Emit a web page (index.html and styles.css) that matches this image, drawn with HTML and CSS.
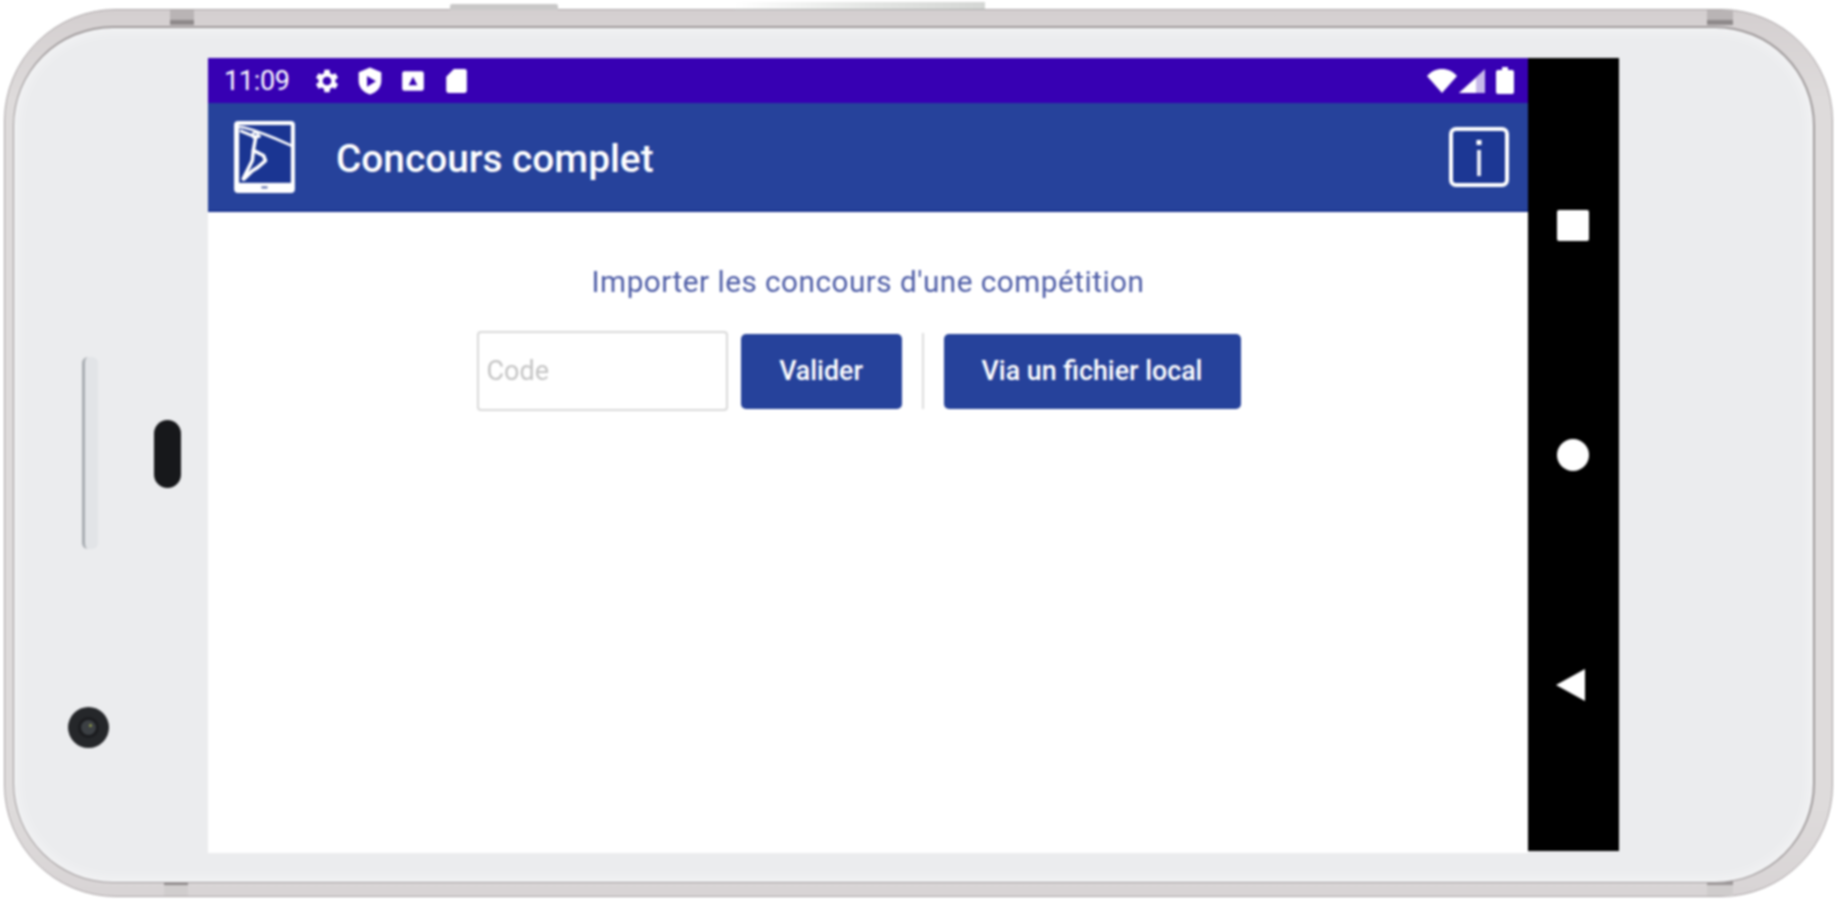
FILE: index.html
```html
<!DOCTYPE html>
<html lang="fr">
<head>
<meta charset="utf-8">
<title>Concours complet</title>
<link rel="stylesheet" href="styles.css">
</head>
<body>
<div class="phone">
  <span class="key key-a"></span>
  <span class="key key-b"></span>
  <span class="seam seam-tl"></span>
  <span class="seam seam-tr"></span>
  <span class="seam seam-bl"></span>
  <span class="seam seam-br"></span>
  <div class="bezel">
    <span class="sensor"></span>
    <span class="speaker"></span>
    <span class="camera"><span class="lens"><span class="glint"></span></span></span>
    <main class="screen">
      <div class="app">
        <div class="statusbar">
          <span class="time">11:09</span>
          <div class="status-icons">
            <svg class="ic" viewBox="2.200 1.500 21 21"><path fill="#fff" fill-rule="evenodd" d="M19.4 13a7.500 7.500 0 0 0 0-2l2.200-1.700-2.100-3.600-2.600 1a7.500 7.500 0 0 0-1.700-1L14.800 2.900h-4.200l-.4 2.800a7.500 7.500 0 0 0-1.700 1l-2.600-1-2.100 3.600L6 11a7.500 7.500 0 0 0 0 2l-2.200 1.700 2.100 3.600 2.600-1a7.500 7.500 0 0 0 1.700 1l.4 2.800h4.200l.4-2.800a7.500 7.500 0 0 0 1.700-1l2.600 1 2.100-3.600zM12.700 15.500a3.500 3.500 0 1 1 0-7 3.500 3.500 0 0 1 0 7z"/></svg>
            <svg class="ic ic-shield" viewBox="2 0.500 20 23.500"><path fill="#fff" fill-rule="evenodd" d="M12 1 2.500 5v7c0 5.500 4 10 9.500 11.500 5.500-1.500 9.500-6 9.500-11.500V5zM9.500 8l7.500 4.500-7.500 4.500z"/></svg>
            <svg class="ic" viewBox="0 0 24 24"><path fill="#fff" fill-rule="evenodd" d="M4 3h16a2 2 0 0 1 2 2v14a2 2 0 0 1-2 2H4a2 2 0 0 1-2-2V5a2 2 0 0 1 2-2zM12 8l-4 8h8z"/></svg>
            <svg class="ic" viewBox="0 0 24 24"><path fill="#fff" d="M10 1h10a2 2 0 0 1 2 2v18a2 2 0 0 1-2 2H5a2 2 0 0 1-2-2V8z"/></svg>
          </div>
          <div class="status-right">
            <svg class="wifi" viewBox="0 0 30 26"><path fill="#fff" d="M15 25 0 8C4 3.500 9 1 15 1s11 2.500 15 7z"/></svg>
            <svg class="signal" viewBox="0 0 26 26"><path fill="#fff" fill-opacity=".72" d="M26 1v24H0z"/><path fill="#fff" d="M17 10v15H0z"/></svg>
            <svg class="battery" viewBox="0 0 18 27"><path fill="#fff" d="M6 0h6v3h4a2 2 0 0 1 2 2v20a2 2 0 0 1-2 2H2a2 2 0 0 1-2-2V5a2 2 0 0 1 2-2h4z"/></svg>
          </div>
        </div>
        <header class="appbar">
          <svg class="logo" viewBox="0 0 62 73">
            <rect x="1" y="1" width="60" height="71" rx="4" fill="#fff"/>
            <rect x="6" y="5" width="51" height="57" fill="#1a3592"/>
            <rect x="28" y="65.500" width="6" height="2" fill="#5a6cab"/>
            <g fill="none" stroke="#fff" stroke-linecap="round" stroke-linejoin="round">
              <path stroke-width="2.500" d="M7 7c10 1 24 7 34 11l16 7"/>
              <path stroke-width="3" d="M8 11l12 5 6 0"/>
              <circle cx="22" cy="15" r="2.800" stroke-width="2"/>
              <path stroke-width="3.500" d="M22 19l-2 11 10 5 2 5-8 7-5 3-8 8"/>
              <path stroke-width="3.500" d="M20 30l-1 10-9 18"/>
            </g>
          </svg>
          <h1 class="title">Concours complet</h1>
          <svg class="info" viewBox="0 0 60 60">
            <rect x="2" y="2" width="56" height="56" rx="5" fill="#1c3794" stroke="#fff" stroke-width="4"/>
            <rect x="27.500" y="13" width="5" height="5" fill="#fff"/>
            <rect x="28" y="23" width="4" height="26" fill="#e6e9f3"/>
          </svg>
        </header>
        <section class="content">
          <p class="lead">Importer les concours d'une compétition</p>
          <div class="import-row">
            <input class="code" type="text" placeholder="Code">
            <button class="btn btn-validate" type="button">Valider</button>
            <span class="divider"></span>
            <button class="btn btn-local" type="button">Via un fichier local</button>
          </div>
        </section>
      </div>
      <nav class="navbar">
        <span class="nav-square"></span>
        <span class="nav-circle"></span>
        <span class="nav-back"></span>
      </nav>
    </main>
  </div>
</div>
</body>
</html>
```

FILE: styles.css
```css
* { box-sizing: border-box; }
html, body { margin: 0; height: 100%; background: #fff; overflow: hidden; }
body { padding: 9px 0 0 4px; font-family: Roboto, "Liberation Sans", sans-serif; }

.phone {
  position: relative;
  width: 1829px;
  height: 888px;
  border-radius: 112px;
  background: linear-gradient(180deg, #d4cfd0, #dedbdb 10%, #dedbdb 90%, #d8d4d5);
  border: 1px solid #a9a3a5;
  padding: 16px 17px 13px 8px;
  filter: blur(0.9px);
}
.key { position: absolute; }
.key-a { left: 445px; top: -6px; width: 108px; height: 6px; background: #c9c8c8; border-radius: 2px 2px 0 0; }
.key-b { left: 730px; top: -8px; width: 250px; height: 8px; background: linear-gradient(90deg, #fff, #e3e5e3 55%, #d4d6d4); border-bottom: 1px solid #aaa; }
.seam { position: absolute; width: 24px; height: 15px; background: #b9b4b5; }
.seam-tl { left: 165px; top: 0; border-bottom: 5px solid #8f8a8b; }
.seam-tr { left: 1702px; top: 0; width: 26px; border-bottom: 5px solid #8f8a8b; }
.seam-bl { left: 159px; bottom: 0; border-top: 4px solid #8f8a8b; background: #d0cdcd; }
.seam-br { left: 1702px; bottom: 0; width: 26px; border-top: 4px solid #9b9697; background: #cfcccc; }

.bezel {
  position: relative;
  height: 100%;
  border-radius: 100px;
  border: 2px solid #a09b9c;
  border-width: 2px 2px 1px 1px;
  background: #ebecee;
  box-shadow: inset 0 0 14px #f8f8f9;
  padding: 30px 0 0 194px;
}
.sensor {
  position: absolute; left: 68px; top: 329px;
  width: 16px; height: 192px;
  border-left: 3px solid #a9adb2;
  border-radius: 6px;
  background: #e2e4e7;
}
.speaker {
  position: absolute; left: 140px; top: 392px;
  width: 27px; height: 68px;
  border-radius: 14px;
  background: #17181b;
}
.camera {
  position: absolute; left: 54px; top: 679px;
  width: 41px; height: 41px;
  border-radius: 50%;
  background: #25272a;
  display: flex; align-items: center; justify-content: center;
}
.lens { position: relative; width: 21px; height: 21px; border-radius: 50%; background: #3c4044; border: 3px solid #1b1c1f; }
.glint { position: absolute; left: 8px; top: 4px; width: 3px; height: 3px; border-radius: 50%; background: #8f9a4a; }

.screen { display: flex; width: 1411px; height: 795px; }
.app { width: 1320px; background: #fff; display: flex; flex-direction: column; }

.statusbar {
  height: 45px; background: #3700b3; color: #fff;
  display: flex; align-items: center; padding: 0 14px 0 16px; flex: none;
}
.time { font-size: 27px; width: 67px; letter-spacing: -.3px; }
.status-icons { display: flex; align-items: center; gap: 17px; margin-left: 23px; }
.ic { width: 26px; height: 26px; display: block; }
.ic-shield { height: 28px; }
.status-right { margin-left: auto; display: flex; align-items: center; }
.wifi { width: 30px; height: 26px; }
.signal { width: 26px; height: 26px; margin-left: 2px; }
.battery { width: 18px; height: 27px; margin-left: 11px; }

.appbar {
  height: 109px; flex: none; background: #26429b;
  border-bottom: 2px solid #1a3490;
  display: flex; align-items: center; padding: 0 19px 0 25px;
}
.logo { width: 63px; height: 74px; display: block; }
.title { margin: 4px 0 0 40px; font-size: 38.800px; font-weight: 500; color: #fff; white-space: nowrap; }
.info { width: 60px; height: 60px; margin-left: auto; display: block; }

.content { flex: 1; display: flex; flex-direction: column; align-items: center; }
.lead { margin: 52px 0 0; font-size: 29.700px; line-height: 36px; color: #4d5ca6; letter-spacing: .5px; }
.import-row { display: flex; align-items: center; margin-top: 31px; height: 80px; margin-left: -19px; }
.code {
  width: 251px; height: 80px; padding: 0 8px;
  border: 2px solid #d9d9d9; border-radius: 4px;
  background: #fff; font: 27px Roboto, sans-serif; outline: 0;
}
.code::placeholder { color: #c4c4c4; }
.btn {
  height: 75px; border: 0; border-radius: 5px;
  background: #26429b; color: #fff;
  font: 500 26.800px Roboto, sans-serif; padding: 0;
}
.btn-validate { width: 161px; margin-left: 13px; }
.divider { width: 2px; height: 76px; background: #dcdcdc; margin: 0 20px 0 20px; }
.btn-local { width: 297px; }

.navbar { position: relative; width: 91px; height: 793px; background: #000; }
.nav-square, .nav-circle, .nav-back { position: absolute; }
.nav-square { left: 29px; top: 152px; width: 32px; height: 31px; background: #fff; border-radius: 2px; }
.nav-circle { left: 29px; top: 381px; width: 32px; height: 32px; background: #fff; border-radius: 50%; }
.nav-back {
  left: 28px; top: 611px; width: 0; height: 0;
  border-style: solid; border-width: 16px 29px 16px 0;
  border-color: transparent #fff transparent transparent;
}
```
